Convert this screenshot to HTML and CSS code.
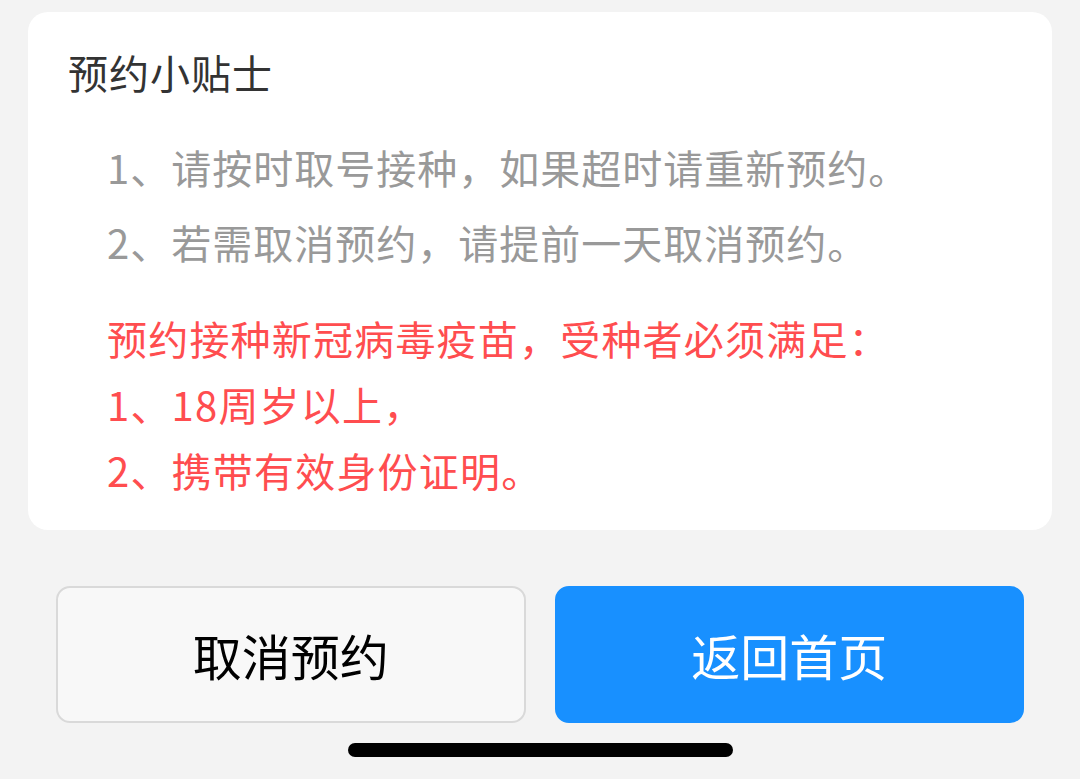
FILE: index.html
```html
<!DOCTYPE html>
<html>
<head>
    <meta charset="utf-8">
    <title>预约小贴士</title>
    <link rel="stylesheet" href="styles.css">
</head>
<body>
    <div class="page">
        <div class="tips-card">
            <h2 class="tips-title">预约小贴士</h2>
            <div class="tips-list">
                <p>1、请按时取号接种，如果超时请重新预约。</p>
                <p>2、若需取消预约，请提前一天取消预约。</p>
            </div>
            <div class="tips-warn">
                <p>预约接种新冠病毒疫苗，受种者必须满足：</p>
                <p>1、18周岁以上，</p>
                <p>2、携带有效身份证明。</p>
            </div>
        </div>
        <div class="actions">
            <button class="btn secondary">取消预约</button>
            <button class="btn primary">返回首页</button>
        </div>
        <div class="home-bar"></div>
    </div>
</body>
</html>
```

FILE: styles.css
```css
:root {
    --primary-color: #1890ff;
    --background-color: #f3f3f3;
    --card-bg: #ffffff;
    --title-color: #333333;
    --muted-color: #999999;
    --danger-color: #ff4d4f;
    --border-color: #d9d9d9;
}
* {
    box-sizing: border-box;
}
body {
    margin: 0;
    padding: 0;
    font-family: "Noto Sans CJK SC", "Noto Sans", sans-serif;
    background-color: var(--background-color);
}
.page {
    padding-top: 12px;
}
.tips-card {
    margin: 0 28px;
    padding: 32px 40px 27px;
    background-color: var(--card-bg);
    border-radius: 20px;
}
.tips-title {
    margin: 0;
    font-size: 40px;
    line-height: 56px;
    font-weight: 400;
    letter-spacing: 1px;
    color: var(--title-color);
}
.tips-list {
    margin-top: 30px;
    padding-left: 39px;
    color: var(--muted-color);
}
.tips-list p {
    margin: 0;
    font-size: 40px;
    line-height: 75px;
    letter-spacing: 1px;
}
.tips-warn {
    margin-top: 25px;
    padding-left: 39px;
    color: var(--danger-color);
}
.tips-warn p {
    margin: 0;
    font-size: 40px;
    line-height: 66px;
    letter-spacing: 1.2px;
}
.actions {
    display: flex;
    gap: 29px;
    margin-top: 56px;
    padding: 0 56px;
}
.btn {
    flex: 1 1 0;
    width: 0;
    height: 137px;
    padding: 0;
    border-radius: 14px;
    border: 2px solid transparent;
    font-family: inherit;
    font-size: 49px;
    cursor: pointer;
}
.btn.secondary {
    background-color: #f8f8f8;
    border-color: var(--border-color);
    color: #000000;
}
.btn.primary {
    background-color: var(--primary-color);
    border-color: var(--primary-color);
    color: #ffffff;
}
.home-bar {
    width: 385px;
    height: 14px;
    margin: 20px auto 0;
    background-color: #000000;
    border-radius: 7px;
}
```
